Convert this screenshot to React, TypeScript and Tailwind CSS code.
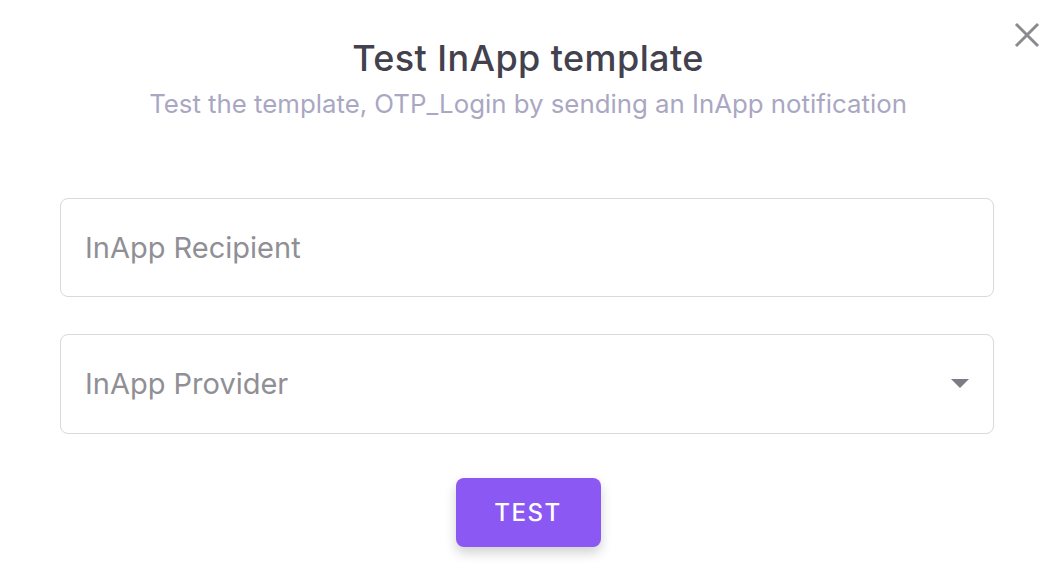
import React from "react";

export default function App() {
  return (
    <div className="relative w-[1056px] h-[574px] bg-white font-['Inter',sans-serif]">
      <button className="absolute right-[14px] top-[20px] text-[#8a8a8f]">
        <svg width="30" height="30" viewBox="0 0 30 30" fill="none">
          <path d="M4 4L26 26M26 4L4 26" stroke="currentColor" strokeWidth="3" />
        </svg>
      </button>
      <div className="flex flex-col items-center pt-[36px]">
        <h2 className="text-[36px] leading-[44px] font-medium tracking-[0.4px] text-[#42414d]">Test InApp template</h2>
        <p className="mt-[7px] text-[25.8px] leading-[34px] text-[#aaa7c3]">
          Test the template, OTP_Login by sending an InApp notification
        </p>
      </div>
      <div className="flex flex-col gap-[37px] pl-[60px] pr-[62px] mt-[77px]">
        <div className="h-[99px] rounded-[8px] border border-[#d9d9dc] flex items-center px-[24px]">
          <span className="text-[29px] text-[#8f8f95]">InApp Recipient</span>
        </div>
        <div className="h-[100px] rounded-[8px] border border-[#d9d9dc] flex items-center justify-between pl-[24px] pr-[24px]">
          <span className="text-[29px] text-[#8f8f95]">InApp Provider</span>
          <svg width="18" height="10" viewBox="0 0 18 10">
            <path d="M0 0H18L9 9Z" fill="#7c7c82" />
          </svg>
        </div>
      </div>
      <div className="flex justify-center mt-[44px]">
        <button className="w-[145px] h-[69px] rounded-[8px] bg-[#8b58f4] text-white text-[24px] font-medium tracking-[1.5px] shadow-[0_6px_12px_rgba(0,0,0,0.18)]">
          TEST
        </button>
      </div>
    </div>
  );
}
